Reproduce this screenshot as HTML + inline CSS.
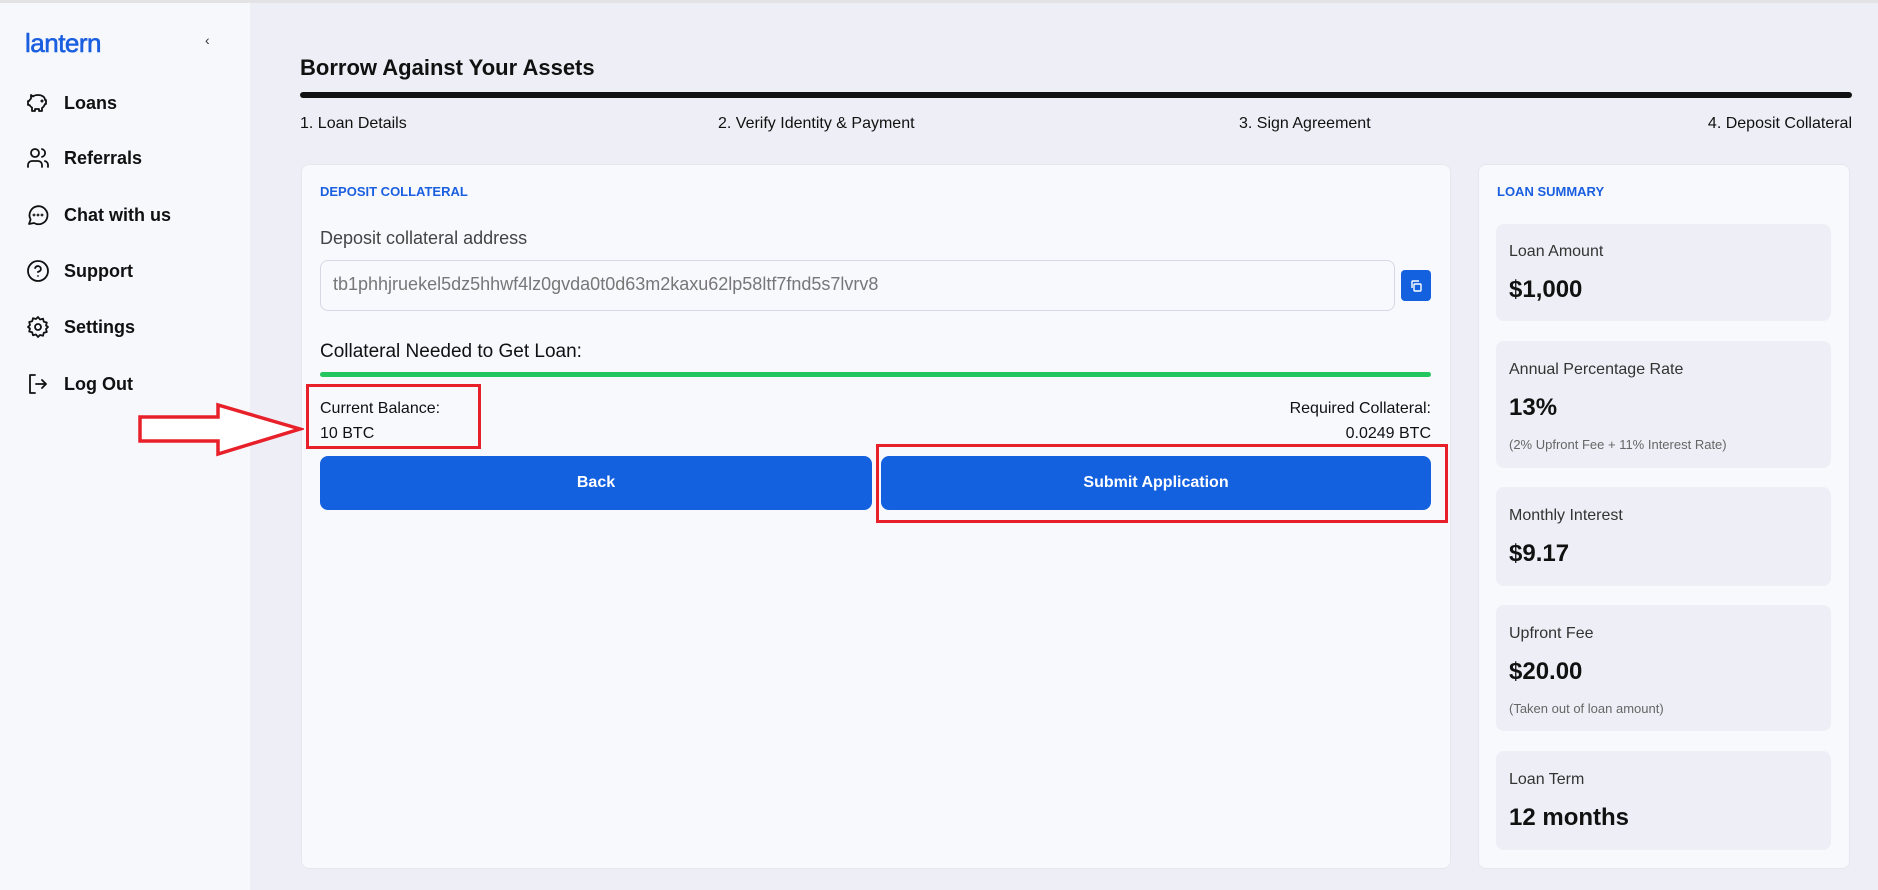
<!DOCTYPE html>
<html><head><meta charset="utf-8"><style>
*{box-sizing:border-box;margin:0;padding:0}
body{width:1878px;height:890px;overflow:hidden;background:#eeeff6;font-family:"Liberation Sans",sans-serif;color:#111;position:relative}
.abs{position:absolute}
.side{left:0;top:3px;width:250px;height:887px;background:#f7f8fc}
.topline{left:0;top:0;width:1878px;height:3px;background:#e3e3e6}
.logo{left:25px;top:28px;font-size:26px;color:#1a5fe0;letter-spacing:-0.5px;-webkit-text-stroke:0.6px #1a5fe0}
.nav{left:26px;font-size:18px;font-weight:bold;display:flex;align-items:center;height:24px}
.nav svg{width:24px;height:24px;margin-right:14px;fill:none;stroke:#111;stroke-width:1.8;stroke-linecap:round;stroke-linejoin:round}
.card{background:#f8f9fd;border:1px solid #e6e7ee;border-radius:8px}
.lbl{font-size:13px;font-weight:bold;color:#1a5fe0}
.btn{background:#1461e0;border-radius:8px;color:#fff;font-weight:bold;font-size:16px;display:flex;align-items:center;justify-content:center}
.box{left:1496px;width:335px;background:#eeeff6;border-radius:8px}
.box .l{position:absolute;left:13px;font-size:16px;color:#333}
.box .v{position:absolute;left:13px;font-size:24px;font-weight:bold;color:#111}
.box .n{position:absolute;left:13px;font-size:13px;color:#666}
.red{border:3px solid #e8202a}
</style></head><body>
<div class="abs topline"></div>
<div class="abs side"></div>
<div class="abs logo">lantern</div>
<div class="abs" style="left:205px;top:32px;font-size:14px;color:#333">‹</div>

<div class="abs nav" style="top:91px"><svg viewBox="0 0 24 24"><path d="M19 9c0-3-3-5-7-5-2 0-4 .5-5 1.5L5 4v3.5C4 8.5 3.5 9.5 3 10H2v4h1.5c.5 1 1.5 2 2.5 2.5V20h3v-2h4v2h3v-3c1.5-1 2.5-2.5 3-4h1V9z"/><circle cx="16" cy="10" r=".6"/></svg>Loans</div>
<div class="abs nav" style="top:146px"><svg viewBox="0 0 24 24"><circle cx="9" cy="7" r="4"/><path d="M2 21v-2a4 4 0 0 1 4-4h6a4 4 0 0 1 4 4v2M16 3.1a4 4 0 0 1 0 7.8M22 21v-2a4 4 0 0 0-3-3.9"/></svg>Referrals</div>
<div class="abs nav" style="top:203px"><svg viewBox="0 0 24 24"><path d="M3 21l1.6-4.5A9 9 0 1 1 8 20z"/><circle cx="8" cy="12" r=".5"/><circle cx="12" cy="12" r=".5"/><circle cx="16" cy="12" r=".5"/></svg>Chat with us</div>
<div class="abs nav" style="top:259px"><svg viewBox="0 0 24 24"><circle cx="12" cy="12" r="10"/><path d="M9.1 9a3 3 0 0 1 5.8 1c0 2-3 3-3 3M12 17h.01"/></svg>Support</div>
<div class="abs nav" style="top:315px"><svg viewBox="0 0 24 24"><circle cx="12" cy="12" r="3"/><path d="M12 2l2 2.5 3-.8.8 3 3 .8-.8 3L22 12l-2 2 .8 3-3 .8-.8 3-3-.8L12 22l-2-2.5-3 .8-.8-3-3-.8.8-3L2 12l2-2-.8-3 3-.8.8-3 3 .8z"/></svg>Settings</div>
<div class="abs nav" style="top:372px"><svg viewBox="0 0 24 24"><path d="M9 3H4v18h5M10 12h10M16 8l4 4-4 4"/></svg>Log Out</div>

<div class="abs" style="left:300px;top:55px;font-size:22px;font-weight:bold">Borrow Against Your Assets</div>
<div class="abs" style="left:300px;top:92px;width:1552px;height:6px;background:#111;border-radius:3px"></div>
<div class="abs" style="left:300px;top:115px;font-size:16px">1. Loan Details</div>
<div class="abs" style="left:718px;top:115px;font-size:16px">2. Verify Identity &amp; Payment</div>
<div class="abs" style="left:1239px;top:115px;font-size:16px">3. Sign Agreement</div>
<div class="abs" style="right:26px;top:115px;font-size:16px">4. Deposit Collateral</div>

<div class="abs card" style="left:301px;top:164px;width:1150px;height:705px"></div>
<div class="abs lbl" style="left:320px;top:184px">DEPOSIT COLLATERAL</div>
<div class="abs" style="left:320px;top:228px;font-size:18px;color:#444">Deposit collateral address</div>
<div class="abs" style="left:320px;top:260px;width:1075px;height:51px;border:1px solid #d5d8e5;border-radius:8px;font-size:18px;color:#777;padding:13px 0 0 12px">tb1phhjruekel5dz5hhwf4lz0gvda0t0d63m2kaxu62lp58ltf7fnd5s7lvrv8</div>
<div class="abs" style="left:1401px;top:270px;width:30px;height:31px;background:#1461e0;border-radius:4px">
<svg width="30" height="31" viewBox="0 0 30 31" fill="none" stroke="#fff" stroke-width="1.4"><rect x="13" y="14" width="7" height="7" rx="1"/><path d="M11 18v-6a1 1 0 0 1 1-1h6"/></svg></div>
<div class="abs" style="left:320px;top:341px;font-size:19px;color:#111">Collateral Needed to Get Loan:</div>
<div class="abs" style="left:320px;top:372px;width:1111px;height:5px;background:#22c55e;border-radius:3px"></div>
<div class="abs" style="left:320px;top:396px;font-size:16px;line-height:25px">Current Balance:<br>10 BTC</div>
<div class="abs" style="right:447px;top:396px;font-size:16px;line-height:25px;text-align:right">Required Collateral:<br>0.0249 BTC</div>
<div class="abs red" style="left:306px;top:384px;width:175px;height:65px"></div>
<svg class="abs" style="left:138px;top:402px" width="166" height="56"><path d="M2 15H80V3L162 27 80 52V39H2z" fill="#fff" stroke="#e8202a" stroke-width="3.5"/></svg>
<div class="abs btn" style="left:320px;top:456px;width:552px;height:54px">Back</div>
<div class="abs btn" style="left:881px;top:456px;width:550px;height:54px">Submit Application</div>
<div class="abs red" style="left:876px;top:444px;width:572px;height:79px"></div>

<div class="abs card" style="left:1478px;top:164px;width:372px;height:705px"></div>
<div class="abs lbl" style="left:1497px;top:184px">LOAN SUMMARY</div>
<div class="abs box" style="top:224px;height:97px"><div class="l" style="top:19px">Loan Amount</div><div class="v" style="top:52px">$1,000</div></div>
<div class="abs box" style="top:341px;height:127px"><div class="l" style="top:20px">Annual Percentage Rate</div><div class="v" style="top:53px">13%</div><div class="n" style="top:96px">(2% Upfront Fee + 11% Interest Rate)</div></div>
<div class="abs box" style="top:487px;height:99px"><div class="l" style="top:20px">Monthly Interest</div><div class="v" style="top:53px">$9.17</div></div>
<div class="abs box" style="top:605px;height:126px"><div class="l" style="top:20px">Upfront Fee</div><div class="v" style="top:53px">$20.00</div><div class="n" style="top:96px">(Taken out of loan amount)</div></div>
<div class="abs box" style="top:751px;height:99px"><div class="l" style="top:20px">Loan Term</div><div class="v" style="top:53px">12 months</div></div>
</body></html>
